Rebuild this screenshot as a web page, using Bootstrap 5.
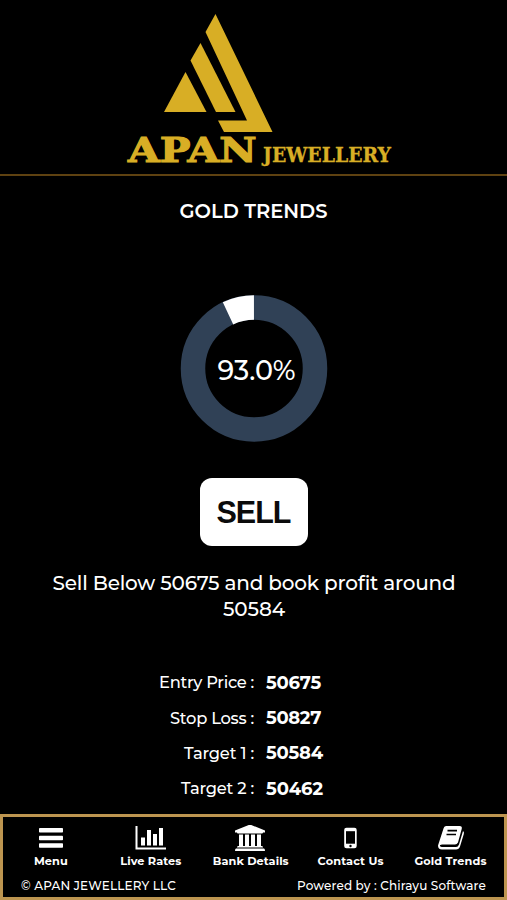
<!DOCTYPE html>
<html lang="en">
<head>
<meta charset="utf-8">
<meta name="viewport" content="width=device-width, initial-scale=1">
<title>Gold Trends</title>
<link href="https://cdn.jsdelivr.net/npm/bootstrap@5.3.0/dist/css/bootstrap.min.css" rel="stylesheet">
<style>
body{background:#000;color:#fff;font-family:Montserrat,Inter,sans-serif;height:900px;overflow:hidden}
svg{display:block}
.brand-bar{height:176px;border-bottom:2px solid #5f4211}
.brand-bar svg text{font-family:"DejaVu Serif",serif;font-weight:700;fill:#d8ae25;stroke:#d8ae25}
.page-title{font-size:19.5px;line-height:24px;margin-top:23.4px;font-weight:600}
.donut{margin-top:69.6px}
.donut-value{font-size:27px;line-height:36px;padding:6px 0 0 6px;font-weight:500}
.signal{width:108px;height:68px;margin-top:35px;border-radius:12px;background:#fff;color:#0b0b0b;font:700 30.5px/68px "Liberation Sans",sans-serif}
.advice{font-size:20px;line-height:26px;margin-top:24px;padding-left:1px;font-weight:500}
.levels{margin-top:43px}
.levels>div{height:35.3px}
.level-name{width:254px;font-size:16.3px;font-weight:500}
.level-price{margin-left:12px;font-size:18px;font-weight:700;padding-top:1px}
.bottom-bar{height:86px;border:3px solid #bd9550;padding-top:8px}
.tabs-row{margin-left:-2px}
.tab{width:99.9px;font-size:11.3px;font-weight:700;line-height:14px}
.tab svg{margin-bottom:-1px}
.credits{font-size:12px;line-height:16px;padding:10px 18px 0;font-weight:500}
.fit{display:inline-block;white-space:nowrap}
</style>
</head>
<body class="d-flex flex-column">
<header class="brand-bar flex-shrink-0">
<svg width="507" height="174" viewBox="0 0 507 174" role="img" aria-label="Apan Jewellery">
<g fill="#d8ae25"><path d="M215.500 14L272.500 132H224L218 120.500H247L205.500 32Z"/><path d="M200.500 43L235.500 112H216L190.500 60.500Z"/><path d="M185.500 72L206.500 112H164Z"/></g>
<text x="128" y="161.800" font-size="33" stroke-width="1.100" textLength="128.500" lengthAdjust="spacingAndGlyphs">APAN</text>
<text x="263" y="162" font-size="20" stroke-width=".3" textLength="128" lengthAdjust="spacingAndGlyphs">JEWELLERY</text>
</svg>
</header>
<main class="flex-grow-1 d-flex flex-column align-items-center text-center">
<h1 class="page-title mb-0"><span class="fit" data-w="148">GOLD TRENDS</span></h1>
<div class="donut d-grid flex-shrink-0">
<svg style="grid-area:1/1" width="148" height="150" viewBox="0 0 148 150"><circle cx="74" cy="75.500" r="61" fill="none" stroke="#304156" stroke-width="24.500"/><circle cx="74" cy="75.500" r="61" fill="none" stroke="#fff" stroke-width="24.500" pathLength="100" stroke-dasharray="7 93" transform="rotate(-115.200 74 75.500)"/></svg>
<div class="donut-value align-self-center" style="grid-area:1/1"><span class="fit" data-w="78">93.0%</span></div>
</div>
<div class="signal flex-shrink-0"><span class="fit" data-w="74">SELL</span></div>
<p class="advice mb-0"><span class="fit" data-w="403">Sell Below 50675 and book profit around</span><br><span class="fit" data-w="62">50584</span></p>
<div class="levels w-100">
<div class="d-flex align-items-center"><div class="level-name text-end"><span class="fit" data-w="95">Entry Price :</span></div><div class="level-price"><span class="fit" data-w="55">50675</span></div></div>
<div class="d-flex align-items-center"><div class="level-name text-end"><span class="fit" data-w="84">Stop Loss :</span></div><div class="level-price"><span class="fit" data-w="55">50827</span></div></div>
<div class="d-flex align-items-center"><div class="level-name text-end"><span class="fit" data-w="70">Target 1 :</span></div><div class="level-price"><span class="fit" data-w="57">50584</span></div></div>
<div class="d-flex align-items-center"><div class="level-name text-end"><span class="fit" data-w="73">Target 2 :</span></div><div class="level-price"><span class="fit" data-w="57">50462</span></div></div>
</div>
</main>
<footer class="bottom-bar flex-shrink-0">
<nav class="tabs-row d-flex">
<div class="tab d-flex flex-column align-items-center"><svg width="32" height="30" viewBox="0 0 32 30" fill="#fff"><rect x="4" y="3" width="24" height="4.500" rx=".8"/><rect x="4" y="10.700" width="24" height="4.500" rx=".8"/><rect x="4" y="18.300" width="24" height="4.500" rx=".8"/></svg><span class="fit" data-w="34">Menu</span></div>
<div class="tab d-flex flex-column align-items-center"><svg width="32" height="30" viewBox="0 0 32 30" fill="#fff"><path d="M.5 1H2.500V22.500H31V24.500H.5ZM6 12.500H10V20.500H6ZM12 5H16V20.500H12ZM18 9H22V20.500H18ZM24 3H28V20.500H24Z"/></svg><span class="fit" data-w="61">Live Rates</span></div>
<div class="tab d-flex flex-column align-items-center"><svg width="32" height="30" viewBox="0 0 32 30" fill="#fff"><g transform="translate(-1 -1)"><path d="M16 .5L31 6.500V8.500H29Q29 9.500 28 9.500H4Q3 9.500 3 8.500H1V6.500ZM5 10.500H9V22H11V10.500H15V22H17V10.500H21V22H23V10.500H27V22H28Q29 22 29 23.500H3Q3 22 4 22H5ZM2 24.500H30Q31 24.500 31 27H1Q1 24.500 2 24.500Z"/></g></svg><span class="fit" data-w="76">Bank Details</span></div>
<div class="tab d-flex flex-column align-items-center"><svg width="32" height="30" viewBox="0 0 32 30"><g transform="translate(-.5 -1.300)"><rect x="9.700" y="4" width="12.500" height="20.500" rx="2.300" fill="#fff"/><rect x="11.500" y="7.500" width="9" height="12.500"/><circle cx="16" cy="22.300" r="1.200"/></g></svg><span class="fit" data-w="66">Contact Us</span></div>
<div class="tab d-flex flex-column align-items-center"><svg width="32" height="30" viewBox="0 0 32 30"><g transform="translate(0 -1.500)"><path d="M11 2.500H24.500Q27.500 2.500 26.700 5.500L23 19Q22 21 20 21H7Q4.500 21 5 22.500Q5.500 23.500 7 23.500H21Q23 23.500 24 21L28 7.500Q29.500 8.500 28.800 10.500L25 23Q24 26 21 26H7Q3 26 3 22L8.500 5Q9 2.500 11 2.500Z" fill="#fff"/><path d="M12.500 7.200H22M11.500 11H21" stroke="#000" stroke-width="1.700"/></g></svg><span class="fit" data-w="72">Gold Trends</span></div>
</nav>
<div class="credits d-flex justify-content-between"><span class="fit" data-w="155">© APAN JEWELLERY LLC</span><span class="fit" data-w="189">Powered by : Chirayu Software</span></div>
</footer>
<script src="https://cdn.jsdelivr.net/npm/bootstrap@5.3.0/dist/js/bootstrap.bundle.min.js"></script>
<script>
// Track each label out to its design width whichever font is available.
document.querySelectorAll('.fit').forEach(e=>{
  const n=e.textContent.length, gap=(e.dataset.w-e.getBoundingClientRect().width)/n;
  e.style.letterSpacing=gap+'px';
});
</script>
</body>
</html>
